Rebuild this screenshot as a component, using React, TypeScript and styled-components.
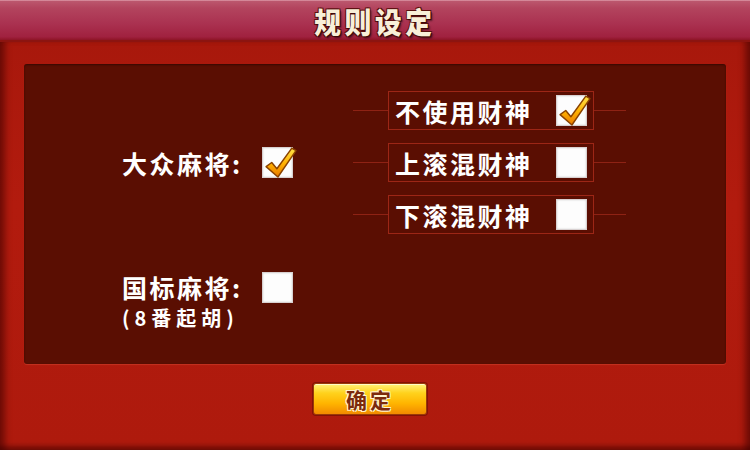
import styled, { createGlobalStyle } from "styled-components";

const GlobalStyle = createGlobalStyle`
  html, body {
    margin: 0;
    padding: 0;
    background: #8a1008;
  }
  * {
    box-sizing: border-box;
  }
`;

const font = `"Noto Sans CJK SC", "Noto Sans", sans-serif`;

// 画面全体
const Screen = styled.div`
  width: 750px;
  height: 450px;
  display: flex;
  flex-direction: column;
  overflow: hidden;
  font-family: ${font};
`;

// タイトルバー
const TitleBar = styled.div`
  height: 42px;
  display: flex;
  justify-content: center;
  align-items: center;
  padding-top: 1px;
  background: linear-gradient(
    to bottom,
    #bd5a70 0%,
    #b3445e 20%,
    #aa3150 60%,
    #a0213f 92%,
    #8e1426 100%
  );
  border-bottom: 2px solid #8c1410;
  box-shadow: inset 0 1px 0 rgba(255, 220, 230, 0.35);
`;

const Title = styled.h1`
  margin: 0;
  font-size: 29px;
  font-weight: 900;
  letter-spacing: 4px;
  line-height: 34px;
  color: #f8efd8;
  transform: scaleX(0.92);
  text-shadow: 1px 1px 0 #3c0808, -1px -1px 0 #5a1010, 1px -1px 0 #5a1010,
    -1px 1px 0 #5a1010, 2px 2px 2px rgba(0, 0, 0, 0.5);
`;

// 赤い枠
const Frame = styled.div`
  flex: 1;
  display: flex;
  flex-direction: column;
  padding: 22px 24px 0;
  background: linear-gradient(to bottom, #a8180c 0%, #b21b0e 40%, #ae1a0d 100%);
  box-shadow: inset 9px 0 6px -4px rgba(60, 0, 0, 0.55),
    inset -9px 0 6px -4px rgba(60, 0, 0, 0.55),
    inset 0 -7px 5px -3px rgba(60, 0, 0, 0.5);
`;

// 濃い色のパネル
const Panel = styled.div`
  height: 300px;
  display: flex;
  flex-direction: column;
  padding: 27px 0 0 98px;
  background: #5a0e02;
  border-radius: 3px;
  box-shadow: 0 1px 1px rgba(255, 120, 90, 0.25), inset 0 1px 2px rgba(0, 0, 0, 0.4);
`;

const ModeRow = styled.div`
  display: flex;
  align-items: center;
`;

const ModeBlock = styled.div`
  display: flex;
  flex-direction: column;
  margin-top: 36px;
`;

const Option = styled.div`
  width: 231px;
  display: flex;
  align-items: center;
`;

const Label = styled.span`
  min-width: 140px;
  font-size: 25px;
  font-weight: 700;
  letter-spacing: 2.5px;
  color: #ffffff;
  line-height: 34px;
`;

const Note = styled.span`
  font-size: 20px;
  font-weight: 700;
  letter-spacing: 5px;
  color: #ffffff;
  line-height: 28px;
`;

const Group = styled.div`
  display: flex;
  flex-direction: column;
  gap: 13px;
`;

const SubRow = styled.div`
  display: flex;
  align-items: center;
`;

const Line = styled.div<{ $w: number }>`
  width: ${(p) => p.$w}px;
  height: 1px;
  background: #8e2214;
`;

const SubBox = styled.div`
  width: 206px;
  height: 39px;
  display: flex;
  align-items: center;
  justify-content: space-between;
  padding: 0 6px 0 6px;
  border: 1px solid #9c2616;
`;

const SubLabel = styled(Label)`
  min-width: 0;
`;

const Box = styled.div`
  width: 31px;
  height: 31px;
  position: relative;
  background: #fdfdfd;
  border: 1px solid #d8d0d0;
  box-shadow: inset 0 0 2px rgba(0, 0, 0, 0.2);
  flex-shrink: 0;
`;

// チェックマーク(ボックスから少しはみ出す)
const CheckMark = styled.svg`
  position: absolute;
  left: 1px;
  top: -3px;
  width: 33px;
  height: 33px;
`;

const Footer = styled.div`
  display: flex;
  justify-content: center;
  padding: 19px 10px 0 0;
`;

const ConfirmButton = styled.button`
  width: 114px;
  height: 32px;
  padding: 0;
  display: flex;
  align-items: center;
  justify-content: center;
  border: 1px solid #9a3a08;
  border-radius: 3px;
  background: linear-gradient(
    to bottom,
    #fff27a 0%,
    #ffd21c 30%,
    #ffb400 65%,
    #f28a00 100%
  );
  box-shadow: 0 0 0 1px rgba(90, 10, 0, 0.5), inset 0 1px 0 rgba(255, 255, 220, 0.8);
  font-family: ${font};
  font-size: 21px;
  font-weight: 700;
  letter-spacing: 3px;
  color: #7c2a0c;
  text-shadow: 1px 1px 0 #fff3d0, -1px -1px 0 #fff3d0, 1px -1px 0 #fff3d0,
    -1px 1px 0 #fff3d0;
  cursor: pointer;
`;

const Check = () => (
  <CheckMark viewBox="0 0 32 32">
    <defs>
      <linearGradient id="chk" x1="0" y1="0" x2="0" y2="1">
        <stop offset="0" stopColor="#ffe34a" />
        <stop offset="0.55" stopColor="#ffb000" />
        <stop offset="1" stopColor="#e87800" />
      </linearGradient>
    </defs>
    <path
      d="M2 21 L7.5 17 L12.5 23 L27 3 L31 5.5 L13.5 31 Z"
      fill="url(#chk)"
      stroke="#8a4200"
      strokeWidth="1.4"
      strokeLinejoin="round"
    />
  </CheckMark>
);

const CheckBox = ({ checked }: { checked?: boolean }) => (
  <Box>{checked && <Check />}</Box>
);

const subOptions = [
  { text: "不使用财神", checked: true },
  { text: "上滚混财神", checked: false },
  { text: "下滚混财神", checked: false },
];

const App = () => {
  return (
    <Screen>
      <GlobalStyle />
      <TitleBar>
        <Title>规则设定</Title>
      </TitleBar>
      <Frame>
        <Panel>
          <ModeRow>
            <Option>
              <Label>大众麻将:</Label>
              <CheckBox checked />
            </Option>
            <Group>
              {subOptions.map((o) => (
                <SubRow key={o.text}>
                  <Line $w={35} />
                  <SubBox>
                    <SubLabel>{o.text}</SubLabel>
                    <CheckBox checked={o.checked} />
                  </SubBox>
                  <Line $w={32} />
                </SubRow>
              ))}
            </Group>
          </ModeRow>
          <ModeBlock>
            <Option>
              <Label>国标麻将:</Label>
              <CheckBox />
            </Option>
            <Note>(8番起胡)</Note>
          </ModeBlock>
        </Panel>
        <Footer>
          <ConfirmButton>确定</ConfirmButton>
        </Footer>
      </Frame>
    </Screen>
  );
};

export default App;
